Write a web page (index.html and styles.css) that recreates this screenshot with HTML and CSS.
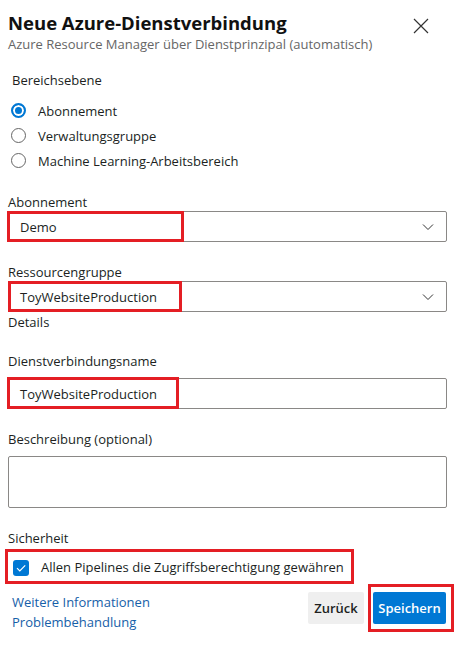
FILE: index.html
```html
<!DOCTYPE html>
<html lang="de">
<head>
<meta charset="utf-8">
<title>Neue Azure-Dienstverbindung</title>
<link rel="stylesheet" href="styles.css">
</head>
<body>
<div class="dialog">
  <header class="head">
    <div class="titles">
      <h1 class="title">Neue Azure-Dienstverbindung</h1>
      <div class="subtitle">Azure Resource Manager über Dienstprinzipal (automatisch)</div>
    </div>
    <button class="close" aria-label="Schließen">
      <svg width="16" height="16" viewBox="0 0 16 16"><path d="M1 1 L15 15 M15 1 L1 15" stroke="#333" stroke-width="1.2" fill="none"/></svg>
    </button>
  </header>

  <section class="scope">
    <div class="scope-label">Bereichsebene</div>
    <div class="radios">
      <div class="radio-row"><span class="radio checked"></span><span>Abonnement</span></div>
      <div class="radio-row"><span class="radio"></span><span>Verwaltungsgruppe</span></div>
      <div class="radio-row"><span class="radio"></span><span>Machine Learning-Arbeitsbereich</span></div>
    </div>
  </section>

  <div class="label l-sub">Abonnement</div>
  <div class="box select">
    <span class="value">Demo</span>
    <svg class="chev" width="12" height="8" viewBox="0 0 12 8"><path d="M1 1.5 L6 6.5 L11 1.5" stroke="#333" stroke-width="1" fill="none"/></svg>
    <span class="mark mark-demo"></span>
  </div>

  <div class="label l-rg">Ressourcengruppe</div>
  <div class="box select">
    <span class="value">ToyWebsiteProduction</span>
    <svg class="chev" width="12" height="8" viewBox="0 0 12 8"><path d="M1 1.5 L6 6.5 L11 1.5" stroke="#333" stroke-width="1" fill="none"/></svg>
    <span class="mark mark-rg"></span>
  </div>
  <div class="label l-details">Details</div>

  <div class="label l-name">Dienstverbindungsname</div>
  <div class="box input">
    <span class="value">ToyWebsiteProduction</span>
    <span class="mark mark-name"></span>
  </div>

  <div class="label l-desc">Beschreibung (optional)</div>
  <div class="box textarea"></div>

  <div class="label l-sec">Sicherheit</div>
  <div class="check-row">
    <span class="checkbox">
      <svg width="16" height="16" viewBox="0 0 16 16"><path d="M4 8.2 L6.8 11 L12.2 5.4" stroke="#fff" stroke-width="1.2" fill="none"/></svg>
    </span>
    <span>Allen Pipelines die Zugriffsberechtigung gewähren</span>
  </div>

  <div class="footer">
    <div class="links">
      <a class="link">Weitere Informationen</a>
      <a class="link">Problembehandlung</a>
    </div>
    <div class="buttons">
      <button class="btn btn-back">Zurück</button>
      <div class="save-mark"><button class="btn btn-save">Speichern</button></div>
    </div>
  </div>
</div>
</body>
</html>
```

FILE: styles.css
```css
* { box-sizing: border-box; }
body {
  margin: 0;
  background: #fff;
  font-family: "Open Sans", "Noto Sans", sans-serif;
  font-size: 13px;
  color: #201f1e;
}
.dialog {
  width: 467px;
  padding: 10px 20px 0 8px;
}
.head {
  display: flex;
  justify-content: space-between;
  align-items: flex-start;
}
.title {
  margin: 0;
  font-size: 18.5px;
  font-weight: 700;
  line-height: 25px;
  color: #111;
}
.subtitle {
  font-size: 13px;
  line-height: 18px;
  color: #666;
}
.close {
  margin: 8px 18px 0 0;
  padding: 0;
  border: 0;
  background: none;
  width: 16px;
  height: 16px;
  display: block;
}
.close svg { display: block; }

.scope { padding-left: 3px; }
.scope-label {
  margin-top: 18px;
  padding-left: 1px;
  line-height: 18px;
}
.radios { margin-top: 9px; }
.radio-row {
  display: flex;
  align-items: center;
  height: 25px;
  gap: 12px;
}
.radio {
  width: 15px;
  height: 15px;
  border-radius: 50%;
  border: 1px solid #666;
  flex: none;
}
.radio.checked {
  border: 2px solid #0078d4;
  background: #0078d4;
  box-shadow: inset 0 0 0 2px #fff;
}

.label { line-height: 18px; }
.l-sub { margin-top: 20px; }
.l-rg { margin-top: 21px; }
.l-details { margin-top: 1px; }
.l-name { margin-top: 21px; margin-bottom: 8px; }
.l-desc { margin-top: 21px; margin-bottom: 8px; }
.l-sec { margin-top: 21px; margin-bottom: 2px; }

.box {
  position: relative;
  width: 439px;
  border: 1px solid #8a8886;
  border-radius: 2px;
  background: #fff;
}
.select, .input {
  height: 31px;
  display: flex;
  align-items: center;
  padding: 0 12px 0 11px;
}
.select { justify-content: space-between; }
.value { color: #201f1e; }
.chev { display: block; }
.textarea { height: 52px; }

.mark {
  position: absolute;
  left: -2px;
  top: -1px;
  bottom: -1px;
  border: 3px solid #e41e24;
}
.mark-demo { width: 177px; }
.mark-rg { width: 174px; left: -1px; }
.mark-name { width: 172px; top: -2px; }

.check-row {
  display: inline-flex;
  align-items: center;
  gap: 12px;
  height: 35px;
  margin-left: -3px;
  padding: 0 7px 0 5px;
  border: 3px solid #e41e24;
}
.checkbox {
  width: 16px;
  height: 16px;
  border-radius: 3px;
  background: #0078d4;
  flex: none;
  margin-top: 2px;
}
.checkbox svg { display: block; }

.footer {
  display: flex;
  justify-content: space-between;
  align-items: flex-start;
}
.links {
  display: flex;
  flex-direction: column;
  padding: 8px 0 0 4px;
}
.link {
  color: #1660a8;
  line-height: 20px;
  text-decoration: none;
}
.buttons {
  display: flex;
  align-items: flex-start;
  gap: 4px;
  margin-right: -7px;
}
.btn {
  height: 32px;
  border: 0;
  border-radius: 2px;
  font-family: inherit;
  font-size: 13px;
  font-weight: 600;
  padding: 0;
}
.btn-back {
  margin-top: 8px;
  width: 56px;
  background: #efefef;
  color: #201f1e;
}
.save-mark {
  border: 3px solid #e41e24;
  padding: 5px 5px 5px 2px;
}
.btn-save {
  width: 73px;
  background: #0078d4;
  color: #fff;
}
```
